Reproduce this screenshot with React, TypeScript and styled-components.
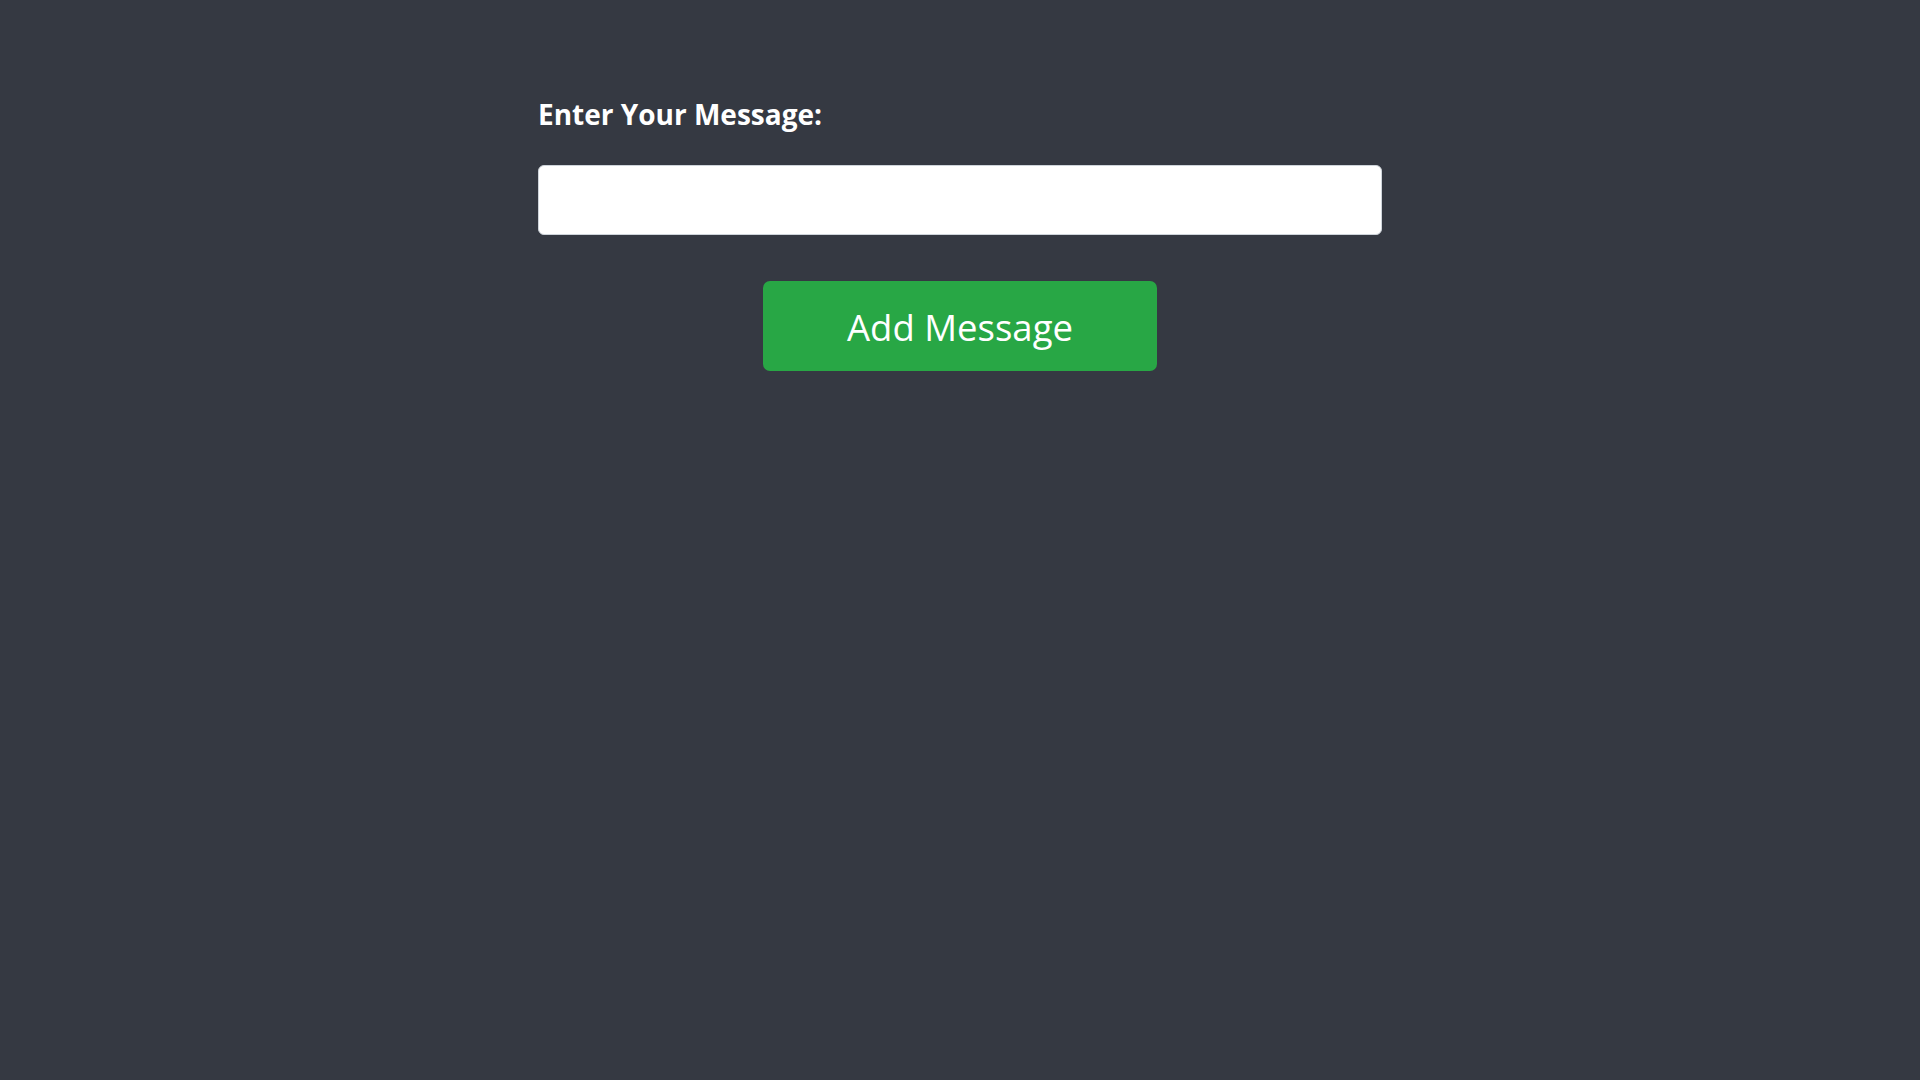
import React from "react";
import styled, { createGlobalStyle } from "styled-components";

const Global = createGlobalStyle`
  html, body { margin: 0; padding: 0; background: #353942; }
  body { font-family: "Open Sans", "Noto Sans", sans-serif; min-height: 100vh; }
`;

const Page = styled.div`
  display: flex;
  justify-content: center;
  padding-top: 94px;
`;

const Form = styled.form`
  width: 844px;
  display: flex;
  flex-direction: column;
  align-items: stretch;
`;

const Label = styled.label`
  color: #ffffff;
  font-weight: 700;
  font-size: 28px;
  line-height: 40px;
  margin-bottom: 31px;
`;

const Input = styled.input`
  box-sizing: border-box;
  height: 70px;
  width: 100%;
  background: #ffffff;
  border: 1px solid #ced4da;
  border-radius: 6px;
  font-size: 24px;
  padding: 0 16px;
  outline: none;
`;

const Button = styled.button`
  align-self: center;
  margin-top: 46px;
  width: 394px;
  height: 90px;
  background: #28a745;
  border: none;
  border-radius: 7px;
  color: #ffffff;
  font-family: "Open Sans", "Noto Sans", sans-serif;
  font-size: 36.5px;
  font-weight: 400;
  padding: 2px 0 0;
  cursor: pointer;
`;

export default function App() {
  return (
    <>
      <Global />
      <Page>
        <Form onSubmit={(e) => e.preventDefault()}>
          <Label htmlFor="msg">Enter Your Message:</Label>
          <Input id="msg" type="text" />
          <Button type="submit">Add Message</Button>
        </Form>
      </Page>
    </>
  );
}
